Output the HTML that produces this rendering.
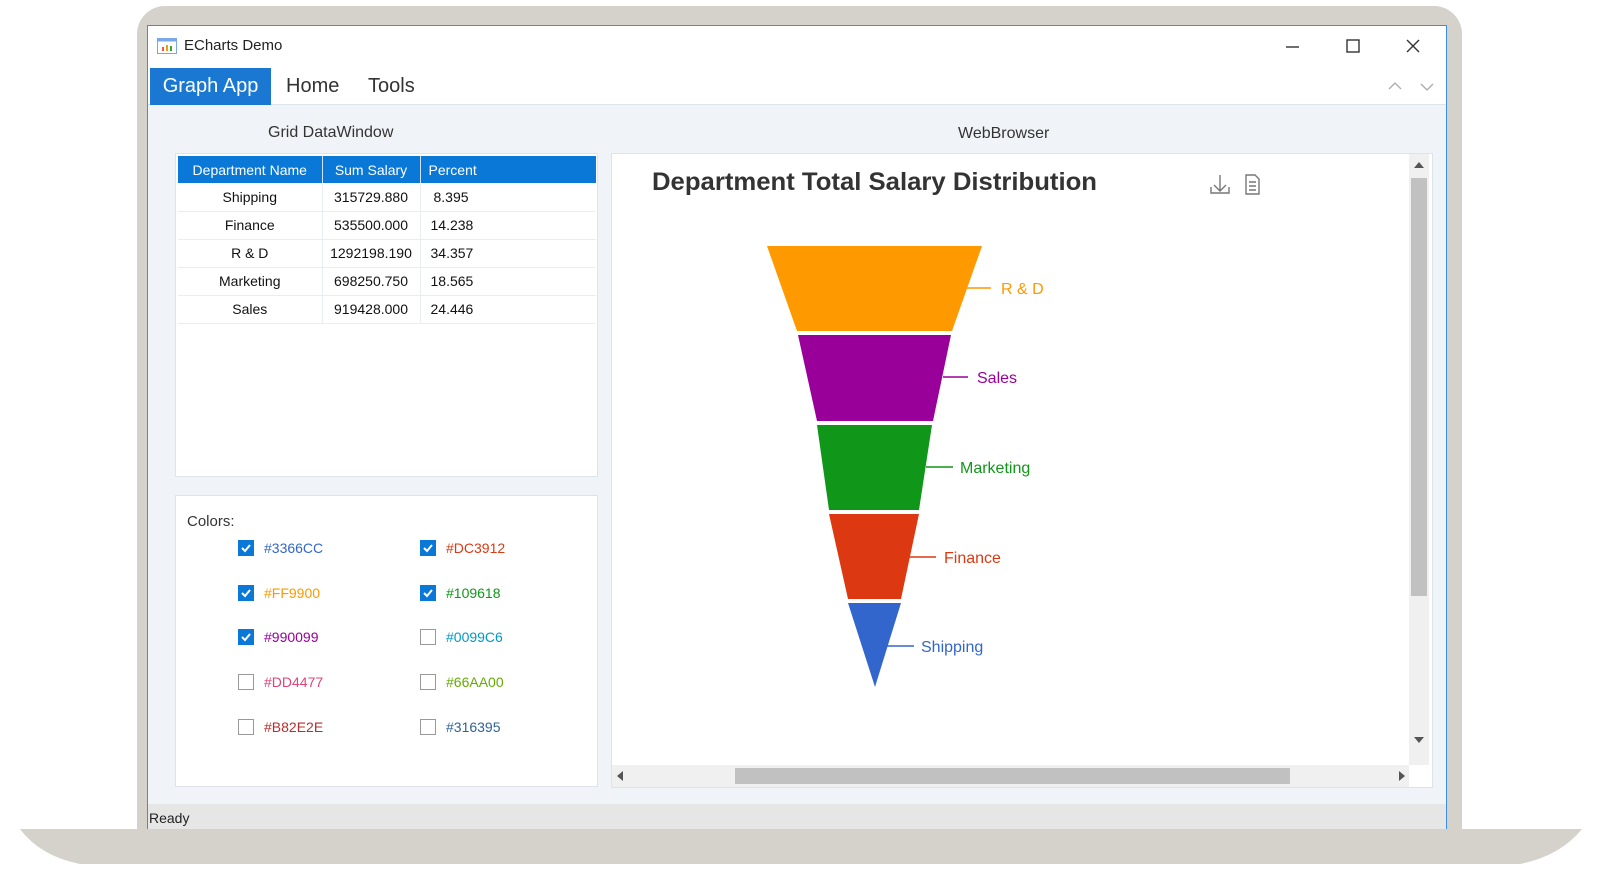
<!DOCTYPE html>
<html><head><meta charset="utf-8"><style>
*{margin:0;padding:0;box-sizing:border-box}
body{width:1600px;height:871px;background:#fff;position:relative;overflow:hidden;font-family:"Liberation Sans",sans-serif;color:#222}
.a{position:absolute}
.frame{left:137px;top:6px;width:1325px;height:830px;background:#d5d2cc;border-radius:28px 28px 0 0}
.win{left:147px;top:25px;width:1300px;height:804px;background:#f0f4f8;border:1px solid #3a8ee6}
.t{white-space:nowrap}
table{border-collapse:collapse;font-size:14px;color:#111}
</style></head><body>
<div class="a frame"></div>
<svg class="a" style="left:0;top:826px" width="1600" height="45"><path d="M20 3 L1582 3 Q1560 30 1520 38 L80 38 Q40 30 20 3Z" fill="#d5d2cc"/></svg>
<div class="a win">
  <div class="a" style="left:0;top:0;width:1298px;height:79px;background:#fff;border-bottom:1px solid #dde3ea"></div>
  <svg class="a" style="left:9px;top:12px" width="20" height="16"><rect x="0.5" y="0.5" width="19" height="15" fill="#fff" stroke="#7aa7e8"/><rect x="0.5" y="0.5" width="19" height="3" fill="#7aa7e8"/><rect x="5" y="9" width="2" height="4" fill="#e55"/><rect x="9" y="7" width="2" height="6" fill="#f90"/><rect x="13" y="8" width="2" height="5" fill="#3a3"/></svg>
  <div class="a t" style="left:36px;top:11px;font-size:15px">ECharts Demo</div>
  <svg class="a" style="left:1130px;top:10px" width="160" height="22" fill="none" stroke="#333" stroke-width="1.4"><path d="M8 11h13"/><rect x="69" y="4" width="12" height="12"/><path d="M129 4l12 12M141 4l-12 12"/></svg>
  <div class="a t" style="left:2px;top:42px;width:121px;height:37px;background:#1a78d2;color:#fff;font-size:20px;line-height:37px;text-align:center">Graph App</div>
  <div class="a t" style="left:138px;top:49px;font-size:20px;color:#333">Home</div>
  <div class="a t" style="left:220px;top:49px;font-size:20px;color:#333">Tools</div>
  <svg class="a" style="left:1238px;top:54px" width="50" height="14" fill="none" stroke="#aaa" stroke-width="1.3"><path d="M3 9l6-6 6 6M35 4l6 6 6-6"/></svg>
  <div class="a t" style="left:120px;top:98px;font-size:16px;color:#333">Grid DataWindow</div>
  <div class="a t" style="left:810px;top:99px;font-size:16px;color:#333">WebBrowser</div>
  <div class="a" style="left:27px;top:127px;width:423px;height:324px;background:#fff;border:1px solid #dde3ea">
    <table class="a" style="left:2px;top:2px;width:418px">
      <tr style="background:#0a78d7;color:#fff;height:27px"><td style="width:144px;text-align:center;border-right:1px solid #cfe3f7">Department Name</td><td style="width:98px;text-align:center;border-right:1px solid #cfe3f7">Sum Salary</td><td style="padding-left:8px">Percent</td></tr>
      <tr style="height:28px;border-bottom:1px solid #e6edf5"><td style="text-align:center;border-right:1px solid #e6edf5">Shipping</td><td style="text-align:center;border-right:1px solid #e6edf5">315729.880</td><td style="padding-left:13px">8.395</td></tr>
      <tr style="height:28px;border-bottom:1px solid #e6edf5"><td style="text-align:center;border-right:1px solid #e6edf5">Finance</td><td style="text-align:center;border-right:1px solid #e6edf5">535500.000</td><td style="padding-left:10px">14.238</td></tr>
      <tr style="height:28px;border-bottom:1px solid #e6edf5"><td style="text-align:center;border-right:1px solid #e6edf5">R &amp; D</td><td style="text-align:center;border-right:1px solid #e6edf5">1292198.190</td><td style="padding-left:10px">34.357</td></tr>
      <tr style="height:28px;border-bottom:1px solid #e6edf5"><td style="text-align:center;border-right:1px solid #e6edf5">Marketing</td><td style="text-align:center;border-right:1px solid #e6edf5">698250.750</td><td style="padding-left:10px">18.565</td></tr>
      <tr style="height:28px;border-bottom:1px solid #e6edf5"><td style="text-align:center;border-right:1px solid #e6edf5">Sales</td><td style="text-align:center;border-right:1px solid #e6edf5">919428.000</td><td style="padding-left:10px">24.446</td></tr>
    </table>
  </div>
  <div class="a" style="left:27px;top:469px;width:423px;height:292px;background:#fff;border:1px solid #dde3ea">
    <div class="a t" style="left:11px;top:17px;font-size:15px;color:#333">Colors:</div>
  </div>
  <svg class="a" style="left:0;top:0" width="460" height="760" font-family="Liberation Sans" font-size="14">
    <defs><g id="ck"><rect width="16" height="16" fill="#0a78d7"/><path d="M4 8l3 3 5-6" stroke="#fff" stroke-width="2" fill="none"/></g><rect id="uk" x="0.5" y="0.5" width="15" height="15" fill="#fff" stroke="#999"/></defs>
    <use href="#ck" x="90" y="514"/><text x="116" y="527" fill="#3366CC">#3366CC</text>
    <use href="#ck" x="272" y="514"/><text x="298" y="527" fill="#DC3912">#DC3912</text>
    <use href="#ck" x="90" y="559"/><text x="116" y="572" fill="#FF9900">#FF9900</text>
    <use href="#ck" x="272" y="559"/><text x="298" y="572" fill="#109618">#109618</text>
    <use href="#ck" x="90" y="603"/><text x="116" y="616" fill="#990099">#990099</text>
    <use href="#uk" x="272" y="603"/><text x="298" y="616" fill="#0099C6">#0099C6</text>
    <use href="#uk" x="90" y="648"/><text x="116" y="661" fill="#DD4477">#DD4477</text>
    <use href="#uk" x="272" y="648"/><text x="298" y="661" fill="#66AA00">#66AA00</text>
    <use href="#uk" x="90" y="693"/><text x="116" y="706" fill="#B82E2E">#B82E2E</text>
    <use href="#uk" x="272" y="693"/><text x="298" y="706" fill="#316395">#316395</text>
  </svg>
  <div class="a" style="left:463px;top:127px;width:822px;height:635px;background:#fff;border:1px solid #dde3ea"></div>
  <div class="a" style="left:1261px;top:128px;width:20px;height:611px;background:#f0f0f0"></div>
  <div class="a" style="left:1263px;top:152px;width:16px;height:418px;background:#c1c1c1"></div>
  <div class="a" style="left:464px;top:739px;width:797px;height:22px;background:#f0f0f0"></div>
  <div class="a" style="left:587px;top:742px;width:555px;height:16px;background:#c1c1c1"></div>
  <svg class="a" style="left:0;top:0" width="1300" height="770"><path d="M1266 142h10l-5-6z M1266 711h10l-5 6z M469 750l6-5v10z M1251 745v10l6-5z" fill="#555"/></svg>
  <div class="a" style="left:0;top:778px;width:1298px;height:25px;background:#e6e6e6"></div>
  <div class="a t" style="left:1px;top:784px;font-size:14px;color:#222">Ready</div>
</div>
<svg class="a" style="left:0;top:0" width="1600" height="871" font-family="Liberation Sans">
  <text x="652" y="190" font-size="25" font-weight="bold" fill="#333" textLength="445" lengthAdjust="spacingAndGlyphs">Department Total Salary Distribution</text>
  <g fill="none" stroke="#777" stroke-width="1.4">
    <path d="M1220 175v16M1214 185l6 6 6-6M1211 187v6h18v-6"/>
    <path d="M1246 175h9l4 4v15h-13z M1249 182h7M1249 186h7M1249 190h7"/>
  </g>
  <polygon points="767,246 982,246 952,331 797,331" fill="#FF9900"/>
  <polygon points="798,335 951,335 933,421 817,421" fill="#990099"/>
  <polygon points="817,425 932,425 919,510 829,510" fill="#109618"/>
  <polygon points="829,514 919,514 901,599 848,599" fill="#DC3912"/>
  <polygon points="848,603 901,603 875,687" fill="#3366CC"/>
  <g stroke-width="1.5">
    <path d="M967 288h24" stroke="#FF9900"/><path d="M943 377h25" stroke="#990099"/>
    <path d="M926 467h27" stroke="#109618"/><path d="M909 557h27" stroke="#DC3912"/>
    <path d="M887 646h27" stroke="#3366CC"/>
  </g>
  <g font-size="16">
    <text x="1001" y="294" fill="#FF9900">R &amp; D</text>
    <text x="977" y="383" fill="#990099">Sales</text>
    <text x="960" y="473" fill="#109618">Marketing</text>
    <text x="944" y="563" fill="#DC3912">Finance</text>
    <text x="921" y="652" fill="#3366CC">Shipping</text>
  </g>
</svg>
</body></html>
